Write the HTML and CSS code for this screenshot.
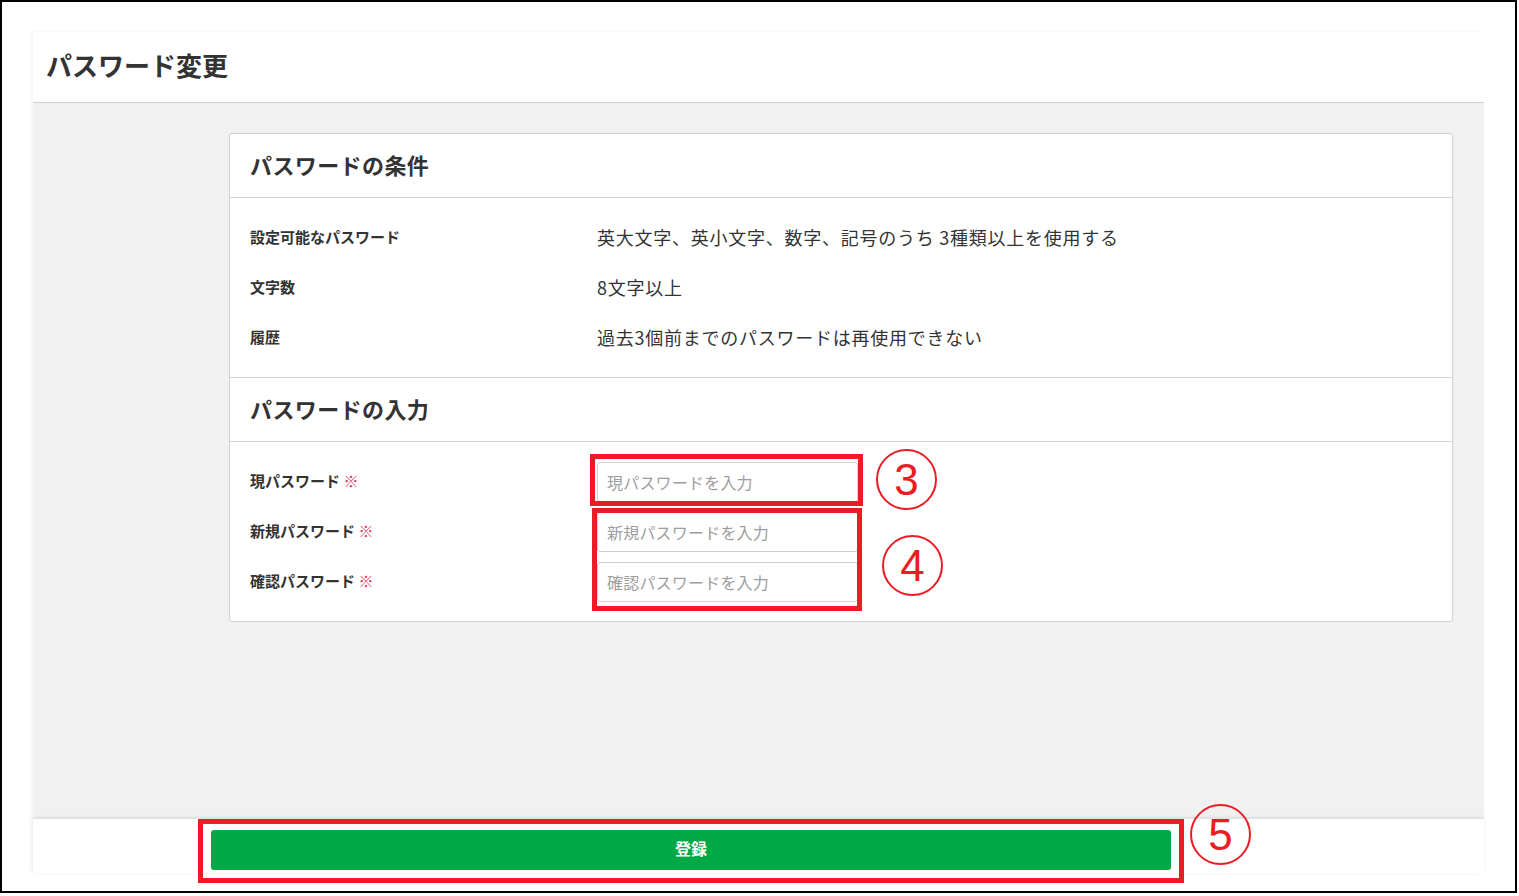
FILE: index.html
```html
<!DOCTYPE html>
<html lang="ja">
<head>
<meta charset="utf-8">
<title>パスワード変更</title>
<link rel="stylesheet" href="styles.css">
</head>
<body>
<div class="frame">
  <div class="panel">
    <header class="page-header">
      <h1 class="page-title">パスワード変更</h1>
    </header>
    <main class="page-body">
      <section class="card">
        <h2 class="card-heading">パスワードの条件</h2>
        <div class="card-rows">
          <div class="row"><div class="label">設定可能なパスワード</div><div class="value">英大文字、英小文字、数字、記号のうち 3種類以上を使用する</div></div>
          <div class="row"><div class="label">文字数</div><div class="value">8文字以上</div></div>
          <div class="row"><div class="label">履歴</div><div class="value">過去3個前までのパスワードは再使用できない</div></div>
        </div>
        <h2 class="card-heading bordered">パスワードの入力</h2>
        <div class="card-rows">
          <div class="row"><div class="label">現パスワード <span class="req">※</span></div><div class="value"><input class="field" type="password" placeholder="現パスワードを入力"></div></div>
          <div class="row"><div class="label">新規パスワード <span class="req">※</span></div><div class="value"><input class="field" type="password" placeholder="新規パスワードを入力"></div></div>
          <div class="row"><div class="label">確認パスワード <span class="req">※</span></div><div class="value"><input class="field" type="password" placeholder="確認パスワードを入力"></div></div>
        </div>
      </section>
    </main>
    <footer class="page-footer">
      <button class="submit" type="button">登録</button>
    </footer>
  </div>

  <div class="mark mark-1"></div>
  <div class="mark mark-2"></div>
  <div class="mark mark-3"></div>
  <div class="num num-3">3</div>
  <div class="num num-4">4</div>
  <div class="num num-5">5</div>
</div>
</body>
</html>
```

FILE: styles.css
```css
* { box-sizing: border-box; }
html, body { margin: 0; padding: 0; background: #fff; }
body {
  font-family: "Noto Sans CJK JP", "Noto Sans", sans-serif;
  color: #333;
}
.frame {
  position: relative;
  width: 1517px;
  height: 893px;
  border: 2px solid #000;
  padding: 30px 31px 0 31px;
}
.panel {
  width: 1451px;
  display: flex;
  flex-direction: column;
  box-shadow: -2px 0 4px rgba(0,0,0,0.05);
}
.page-header {
  height: 71px;
  background: #fff;
  border-bottom: 1px solid #d2d2d2;
  padding: 0 13px;
}
.page-title {
  margin: 0;
  font-size: 26px;
  line-height: 66px;
  font-weight: 700;
  color: #333;
}
.page-body {
  background: #f1f1f1;
  height: 716px;
  padding: 30px 31px 0 196px;
}
.card {
  background: #fff;
  border: 1px solid #d2d2d2;
  border-radius: 3px;
}
.card-heading {
  margin: 0;
  height: 64px;
  padding: 0 20px;
  font-size: 22px;
  line-height: 60px;
  font-weight: 700;
  letter-spacing: 0.4px;
  border-bottom: 1px solid #d2d2d2;
}
.card-heading.bordered { border-top: 1px solid #d2d2d2; height: 65px; }
.card-rows {
  padding: 14px 20px 15px;
}
.row {
  display: grid;
  grid-template-columns: 347px 1fr;
  align-items: center;
  height: 50px;
}
.label {
  font-size: 15px;
  font-weight: 700;
  color: #333;
  line-height: 20px;
}
.req { color: #e5395f; font-weight: 400; }
.value {
  font-size: 18px;
  color: #333;
  letter-spacing: 0.75px;
  line-height: 24px;
}
.field {
  display: block;
  width: 261px;
  height: 40px;
  margin-top: 2px;
  border: 1px solid #cfcfcf;
  border-radius: 3px;
  padding: 0 9px;
  font-family: inherit;
  font-size: 16px;
  letter-spacing: 0.2px;
  color: #333;
  background: #fff;
}
.field::placeholder { color: #9d9d9d; }
.page-footer {
  height: 54px;
  background: #fff;
  padding: 11px 0 0 178px;
  box-shadow: 0 -2px 3px rgba(0,0,0,0.08);
  position: relative;
}
.submit {
  display: block;
  width: 960px;
  height: 40px;
  border: 0;
  border-radius: 3px;
  background: #00a846;
  color: #fff;
  font-family: inherit;
  font-size: 16px;
  font-weight: 700;
  line-height: 32px;
  padding: 0 0 4px;
}
.mark {
  position: absolute;
  border: 5px solid #ec1c24;
}
.mark-1 { left: 588px; top: 452px; width: 273px; height: 52px; }
.mark-2 { left: 590px; top: 506px; width: 270px; height: 103px; }
.mark-3 { left: 196px; top: 817px; width: 986px; height: 64px; }
.num {
  position: absolute;
  width: 61px;
  height: 61px;
  border: 2px solid #ec1c24;
  border-radius: 50%;
  color: #ec1c24;
  font-family: "Liberation Sans", "Noto Sans", sans-serif;
  font-size: 44px;
  line-height: 57px;
  text-align: center;
}
.num-3 { left: 874px; top: 447px; }
.num-4 { left: 880px; top: 533px; }
.num-5 { left: 1188px; top: 802px; }
```
